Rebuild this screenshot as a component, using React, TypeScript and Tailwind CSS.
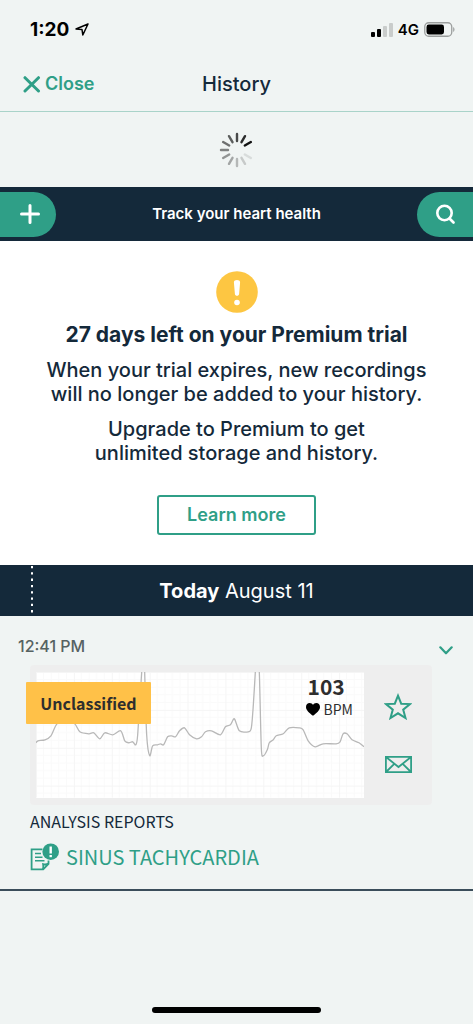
import type { ReactNode } from "react";

// ECG samples in chart units, y grows downwards
const trace: [number, number][] = [
  [0, 71], [2, 69], [9, 68], [15, 64], [21, 52], [31, 46], [39, 52], [44, 60], [53, 62], [58, 61],
  [64, 67], [69, 61], [77, 63], [85, 59], [89, 69], [93, 71], [97, 70], [100, 73], [102, 63], [106, 0],
  [108, -30], [109, 0], [111, 63], [114, 84], [117, 74], [122, 73], [125, 72], [128, 73], [132, 65], [136, 64],
  [140, 65], [144, 59], [149, 56], [154, 63], [161, 67], [166, 65], [170, 60], [176, 59], [185, 63], [190, 55],
  [195, 53], [199, 47], [204, 59], [213, 60], [216, 56], [218, 33], [220, 0], [222, -30], [224, 0], [226, 76],
  [228, 84], [232, 78], [234, 71], [238, 68], [241, 64], [248, 62], [254, 56], [264, 56], [268, 58], [273, 69],
  [280, 75], [288, 72], [301, 72], [305, 70], [308, 62], [312, 62], [317, 68], [324, 71], [329, 75],
];

function smoothPath(points: [number, number][]) {
  let d = `M${points[0][0]} ${points[0][1]}`;
  for (let i = 0; i < points.length - 1; i++) {
    const p0 = points[i - 1] ?? points[i];
    const p1 = points[i];
    const p2 = points[i + 1];
    const p3 = points[i + 2] ?? p2;
    const k = 7;
    d += `C${p1[0] + (p2[0] - p0[0]) / k} ${p1[1] + (p2[1] - p0[1]) / k} `;
    d += `${p2[0] - (p3[0] - p1[0]) / k} ${p2[1] - (p3[1] - p1[1]) / k} ${p2[0]} ${p2[1]}`;
  }
  return d;
}

// clockwise from two o'clock back to one o'clock, darkest first
const spokes = [1, 0, 0.1, 0.18, 0.26, 0.34, 0.42, 0.5, 0.58, 0.66, 0.75, 0.88];

function Spinner() {
  return (
    <svg width="36" height="36" viewBox="-18 -18 36 36" role="img" aria-label="Loading">
      {spokes.map((opacity, i) => (
        <line
          key={i}
          y1="-9" y2="-16"
          stroke="#111" strokeWidth="2.4" strokeLinecap="round"
          opacity={opacity}
          transform={`rotate(${60 + i * 30})`}
        />
      ))}
    </svg>
  );
}

function StatusBar() {
  return (
    <div className="flex h-[57px] items-center justify-between pl-[30px] pr-[18px] pt-0.5 text-black">
      <div className="flex items-center gap-1.5">
        <span className="text-[19px] font-bold leading-6">1:20</span>
        <svg width="14" height="13" viewBox="0 0 14 13" fill="none" stroke="currentColor" strokeWidth="1.5" strokeLinejoin="round">
          <path d="M13 1 1 6l6 .5.800 5.500z" />
        </svg>
      </div>
      <div className="flex items-center gap-[5px]">
        <svg width="22" height="14" viewBox="0 0 22 14">
          <rect x="0" y="9" width="4" height="5" rx="1" />
          <rect x="6" y="6" width="4" height="8" rx="1" />
          <rect x="12" y="3" width="4" height="11" rx="1" fill="#c9cccb" />
          <rect x="18" y="0" width="4" height="14" rx="1" fill="#c9cccb" />
        </svg>
        <span className="text-[15px] font-semibold leading-5">4G</span>
        <svg width="31" height="15" viewBox="0 0 31 15">
          <rect x="0.75" y="0.75" width="27" height="13.5" rx="4" fill="none" stroke="#9b9e9d" strokeWidth="1.3" />
          <rect x="2.5" y="2.6" width="17.5" height="9.8" rx="2.3" />
          <path d="M29.2 5v5c1.7-.7 1.7-4.300 0-5z" fill="#9b9e9d" />
        </svg>
      </div>
    </div>
  );
}

function IconButton({ label, className, children }: { label: string; className: string; children: ReactNode }) {
  return (
    <button type="button" aria-label={label} className={className}>
      {children}
    </button>
  );
}

function EcgChart() {
  return (
    <svg viewBox="0 0 329 126" className="block h-auto w-full bg-white">
      <defs>
        <pattern id="grid" width="38" height="38" patternUnits="userSpaceOnUse">
          <path
            d="M7.600 0V38M15.200 0V38M22.800 0V38M30.400 0V38M0 7.600H38M0 15.200H38M0 22.800H38M0 30.400H38"
            stroke="#fafafa" fill="none"
          />
          <path d="M0 0V38M0 0H38" stroke="#f5f5f5" strokeWidth="2" fill="none" />
        </pattern>
      </defs>
      <rect width="329" height="126" fill="url(#grid)" />
      <path d={smoothPath(trace)} fill="none" stroke="#b8b8b8" strokeWidth="1.3" strokeLinejoin="round" />
    </svg>
  );
}

function Recording() {
  return (
    <section className="border-b-2 border-[#3b4d5a] pb-4 pt-5">
      <div className="flex items-center justify-between pl-[18px] pr-5">
        <time className="text-[16px] font-medium leading-5 text-[#566262]">12:41 PM</time>
        <IconButton label="Collapse recording" className="pt-2 text-[#2f9f87]">
          <svg width="14" height="9" viewBox="0 0 14 9" fill="none" stroke="currentColor" strokeWidth="2.2" strokeLinecap="round" strokeLinejoin="round">
            <path d="M1.300 1.300 7 7.300l5.700-6" />
          </svg>
        </IconButton>
      </div>

      <div className="relative ml-[30px] mr-[41px] mt-[9px] flex rounded-sm bg-[#eeeeee] py-[7px] pl-1.5 font-['Noto_Sans_CJK_SC',sans-serif]">
        <div className="relative flex-1">
          <EcgChart />
          <div className="absolute right-[11px] top-0 text-[#2e2e2e]">
            <p className="pl-0.5 text-[21px] font-bold leading-7">103</p>
            <p className="flex items-center gap-1 text-[14px] leading-[18px]">
              <svg width="14" height="13" viewBox="0 0 14 13" fill="#000">
                <path d="M7 12.800C3 9.500 0 7 0 3.900 0 1.600 1.600 0 3.700 0 5.200 0 6.300.7 7 1.900 7.700.7 8.800 0 10.300 0 12.400 0 14 1.600 14 3.900 14 7 11 9.500 7 12.800z" />
              </svg>
              BPM
            </p>
          </div>
        </div>
        <div className="flex w-[68px] flex-col items-center gap-8 pt-[21px] text-[#2f9f87]">
          <IconButton label="Add to favourites" className="block">
            <svg width="28" height="27" viewBox="0 0 28 27" fill="none" stroke="currentColor" strokeWidth="2">
              <path d="M14 2.700 17.200 10.700 26 11.100 19.200 16.600 21.500 25 14 20.300 6.500 25 8.800 16.600 2 11.100 10.800 10.700z" />
            </svg>
          </IconButton>
          <IconButton label="Send by email" className="block pt-1">
            <svg width="27" height="17" viewBox="0 0 27 17" fill="none" stroke="currentColor" strokeWidth="1.8">
              <path d="M.9.9h25.200v15.200H.9zM1 1l12.500 10L26 1M1 16l8.300-8.200M26 16l-8.300-8.200" />
            </svg>
          </IconButton>
        </div>
        <div className="absolute -left-1 top-[17px] flex h-[42px] w-[125px] items-center justify-center rounded-[1px] bg-[#ffc148] text-[16px] font-bold leading-6 text-[#2e2e2e]">
          Unclassified
        </div>
      </div>

      <div className="ml-[30px] mt-1 font-['Noto_Sans_CJK_SC',sans-serif]">
        <h3 className="text-[16px] leading-6 text-[#14293a]">ANALYSIS REPORTS</h3>
        <a href="#sinus-tachycardia" className="mt-2 flex items-center gap-1.5 text-[20px] leading-8 text-[#2f9f87]">
          <svg width="30" height="28" viewBox="0 0 30 28" fill="none" stroke="currentColor" strokeWidth="1.8">
            <path d="M12.500 6.400H1.600v20h11.600l5.300-5.600v-3.200M12.800 26.200c1-1.600.5-3.600.3-5 1.700.5 3.700.4 5.300-.6" />
            <path d="M5 10.600h6M5 14.200h7.500M5 17.700h9.500" strokeWidth="1.500" />
            <circle cx="20.700" cy="8.700" r="8.300" fill="currentColor" stroke="none" />
            <path d="M20.700 3.500v7" stroke="#fff" strokeWidth="2.400" />
            <path d="M20.700 12v2.200" stroke="#fff" strokeWidth="2.400" />
          </svg>
          SINUS TACHYCARDIA
        </a>
      </div>
    </section>
  );
}

export default function App() {
  return (
    <div className="flex min-h-screen flex-col bg-[#f0f4f3] font-[Inter,sans-serif] text-[#14293a]">
      <StatusBar />

      <header className="grid h-[55px] grid-cols-3 items-center border-b border-[#a9d3c9] px-[23px]">
        <a href="#close" className="flex items-center gap-1 text-[18px] font-semibold leading-6 text-[#2f9f87]">
          <svg width="18" height="17" viewBox="0 0 18 17" fill="none" stroke="currentColor" strokeWidth="3" strokeLinecap="round">
            <path d="M2 1.700 15.500 15M15.500 1.700 2 15" />
          </svg>
          Close
        </a>
        <h1 className="text-center text-[20px] font-medium leading-6">History</h1>
      </header>

      <div className="flex h-[75px] items-center justify-center">
        <Spinner />
      </div>

      <div className="flex h-[54px] items-center justify-between bg-[#14293a] text-white">
        <IconButton label="Add recording" className="flex h-[45px] w-14 items-center justify-center rounded-r-full bg-[#2f9f87] pl-1">
          <svg width="20" height="20" viewBox="0 0 20 20" stroke="currentColor" strokeWidth="3" strokeLinecap="round">
            <path d="M10 1.500v17M1.500 10h17" />
          </svg>
        </IconButton>
        <p className="text-[15px] font-semibold leading-5">Track your heart health</p>
        <IconButton label="Search" className="flex h-[45px] w-14 items-center justify-center rounded-l-full bg-[#2f9f87]">
          <svg width="20" height="20" viewBox="0 0 20 20" fill="none" stroke="currentColor" strokeWidth="2.600" strokeLinecap="round">
            <circle cx="9.500" cy="9" r="7.200" />
            <path d="m14.500 14.500 4 4" />
          </svg>
        </IconButton>
      </div>

      {/* Trial notice */}
      <section className="flex flex-col items-center bg-white px-6 pb-[30px] pt-[30px] text-center">
        <svg width="42" height="42" viewBox="0 0 42 42">
          <circle cx="21" cy="21" r="20.800" fill="#fdc642" />
          <path d="M17.900 11.500c-.1-3.200 6.300-3.200 6.200 0l-1 11.500c-.2 2.400-4 2.400-4.200 0z" fill="#fff" />
          <circle cx="21" cy="31.500" r="2.800" fill="#fff" />
        </svg>
        <h2 className="mt-2.5 text-[21px] font-bold leading-6">27 days left on your Premium trial</h2>
        <p className="mt-[11px] text-[20px] font-medium leading-6">
          When your trial expires, new recordings
          <br />
          will no longer be added to your history.
        </p>
        <p className="mt-[11px] text-[20px] font-medium leading-6">
          Upgrade to Premium to get
          <br />
          unlimited storage and history.
        </p>
        <button type="button" className="mt-[30px] h-10 w-[159px] rounded-[3px] border-2 border-[#2f9f87] text-[18px] font-semibold leading-6 text-[#2f9f87]">
          Learn more
        </button>
      </section>

      {/* Day divider */}
      <div className="relative flex h-[51px] items-center justify-center bg-[#14293a] text-white">
        <svg className="absolute left-[31px] top-0" width="2" height="51">
          <path d="M1 1v48" stroke="#fff" strokeWidth="2" strokeDasharray="2.300 4" />
        </svg>
        <h2 className="text-[20px] leading-6">
          <strong className="font-bold">Today</strong> August 11
        </h2>
      </div>

      <Recording />

      <div className="mt-auto flex justify-center pb-[11px]">
        <div className="h-1.5 w-[169px] rounded-full bg-black" />
      </div>
    </div>
  );
}
